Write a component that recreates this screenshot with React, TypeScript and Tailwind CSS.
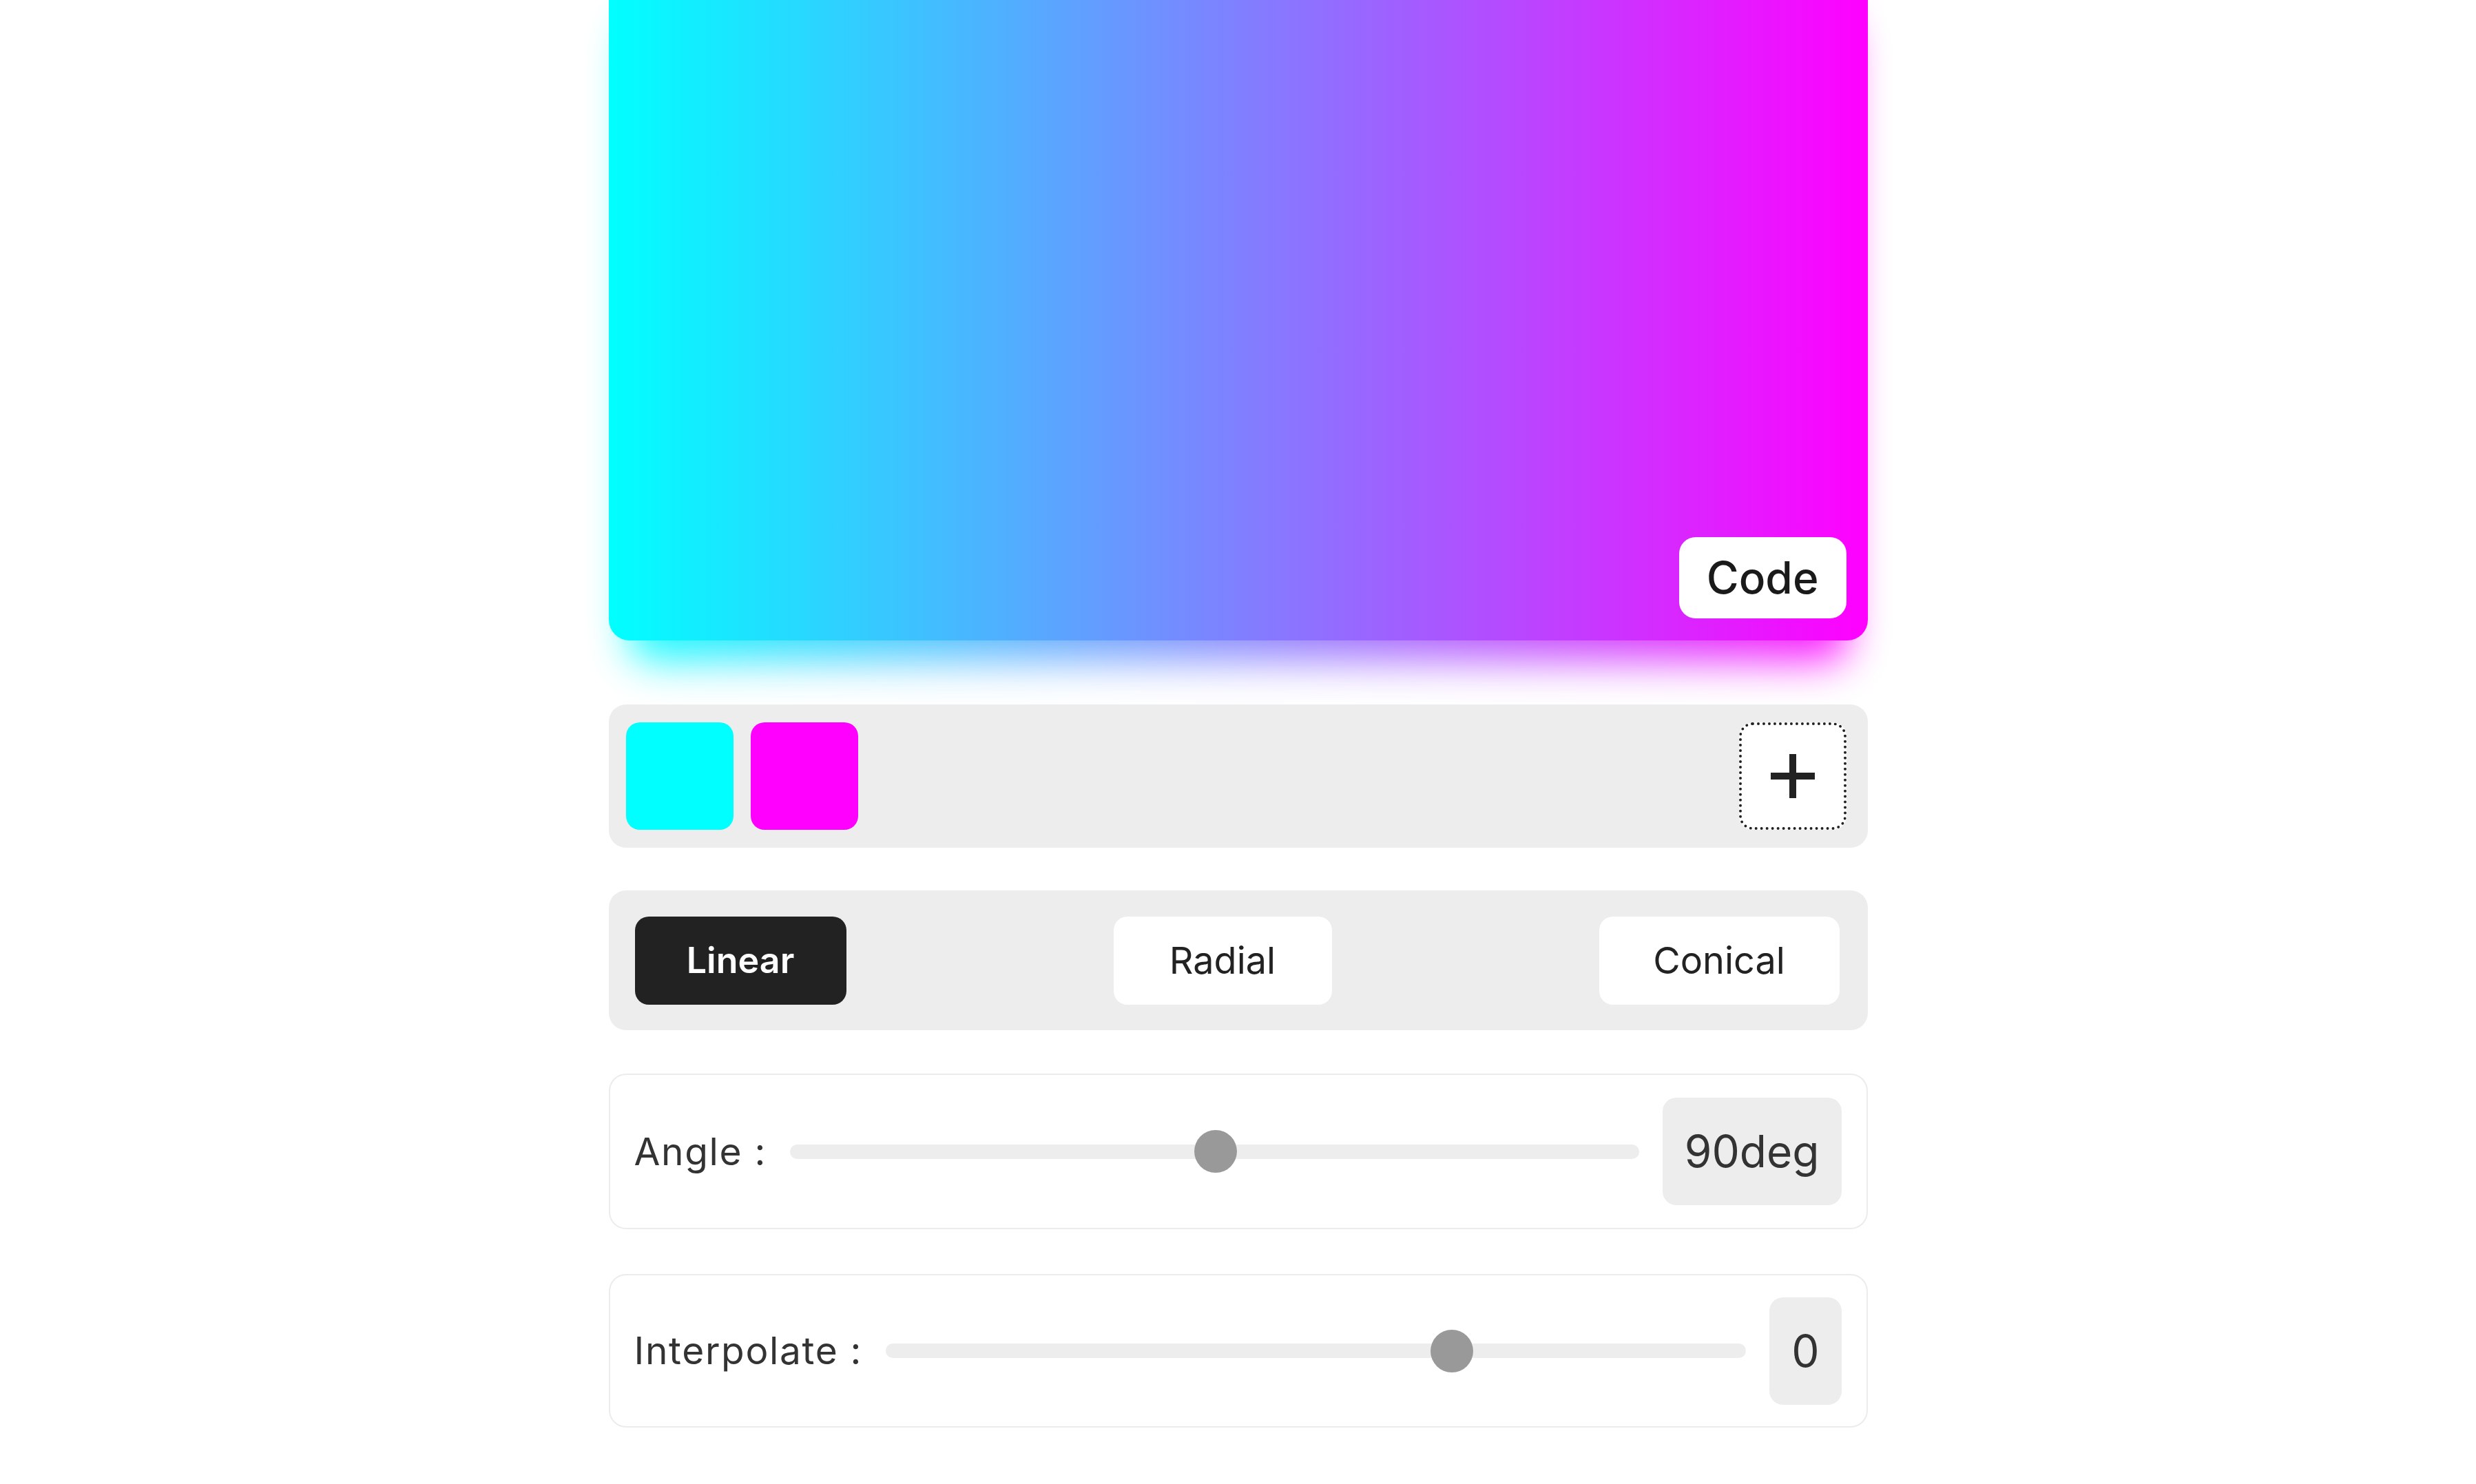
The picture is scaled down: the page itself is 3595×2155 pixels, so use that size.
import React from "react";

const sliders = [
  { label: "Angle :", value: "90deg", pos: 50.1, height: "h-[226px]", mt: "mt-[63px]" },
  { label: "Interpolate :", value: "0", pos: 65.8, height: "h-[223px]", mt: "mt-[65px]" },
];

function SliderRow({ label, value, pos, height, mt }: (typeof sliders)[number]) {
  return (
    <div
      className={`${mt} ${height} flex items-center gap-[34px] rounded-[25px] border-2 border-[#ececec] bg-white pl-[35px] pr-[36px]`}
    >
      <span className="shrink-0 text-[55px] leading-none tracking-[0.03em] text-[#333]">
        {label}
      </span>

      <div className="relative h-[21px] flex-1 rounded-full bg-[#ededed]">
        <span
          className="absolute top-1/2 h-[62px] w-[62px] -translate-x-1/2 -translate-y-1/2 rounded-full bg-[#999]"
          style={{ left: `${pos}%` }}
        />
      </div>

      <div className="flex h-[156px] shrink-0 items-center rounded-[20px] bg-[#ededed] px-[32px] text-[64px] leading-none text-[#333]">
        {value}
      </div>
    </div>
  );
}

export default function App() {
  return (
    <div className="min-h-screen w-full bg-white font-['Inter',sans-serif] text-[#222]">
      <div className="mx-auto flex w-[1828px] flex-col">

        {/* Preview */}
        <div className="relative h-[930px]">
          <div className="absolute inset-x-[30px] top-[30px] -bottom-[30px] rounded-[30px] bg-[linear-gradient(90deg,#00ffff,#ff00ff)] opacity-90 blur-[30px]" />
          <div className="relative flex h-full items-end justify-end rounded-b-[30px] bg-[linear-gradient(90deg,#00ffff,#ff00ff)] pb-[32px] pr-[31px]">
            <button className="h-[118px] rounded-[24px] bg-white px-[40px] text-[64px] font-medium leading-none text-[#1a1a1a]">
              Code
            </button>
          </div>
        </div>

        {/* Colour stops */}
        <div className="relative mt-[93px] flex h-[208px] items-center justify-between rounded-[25px] bg-[#ededed] pl-[25px] pr-[31px]">
          <div className="flex gap-[25px]">
            <div className="h-[156px] w-[156px] rounded-[20px] bg-[#00ffff]" />
            <div className="h-[156px] w-[156px] rounded-[20px] bg-[#ff00ff]" />
          </div>
          <button className="flex h-[156px] w-[156px] items-center justify-center rounded-[20px] border-[4px] border-dotted border-[#222] bg-white">
            <svg width="66" height="66" viewBox="0 0 66 66">
              <path d="M33 1v64M1 33h64" stroke="#222" strokeWidth="10" />
            </svg>
          </button>
        </div>

        {/* Type */}
        <div className="mt-[62px] flex h-[203px] items-center justify-between rounded-[25px] bg-[#ededed] pl-[38px] pr-[41px]">
          <button className="flex h-[128px] w-[307px] items-center justify-center rounded-[20px] bg-[#222] text-[52px] font-semibold leading-none text-white">
            Linear
          </button>
          <button className="flex h-[128px] w-[317px] items-center justify-center rounded-[20px] bg-white text-[54px] leading-none text-[#222]">
            Radial
          </button>
          <button className="flex h-[128px] w-[349px] items-center justify-center rounded-[20px] bg-white text-[54px] leading-none text-[#222]">
            Conical
          </button>
        </div>

        {sliders.map((s) => (
          <SliderRow key={s.label} {...s} />
        ))}

      </div>
    </div>
  );
}
